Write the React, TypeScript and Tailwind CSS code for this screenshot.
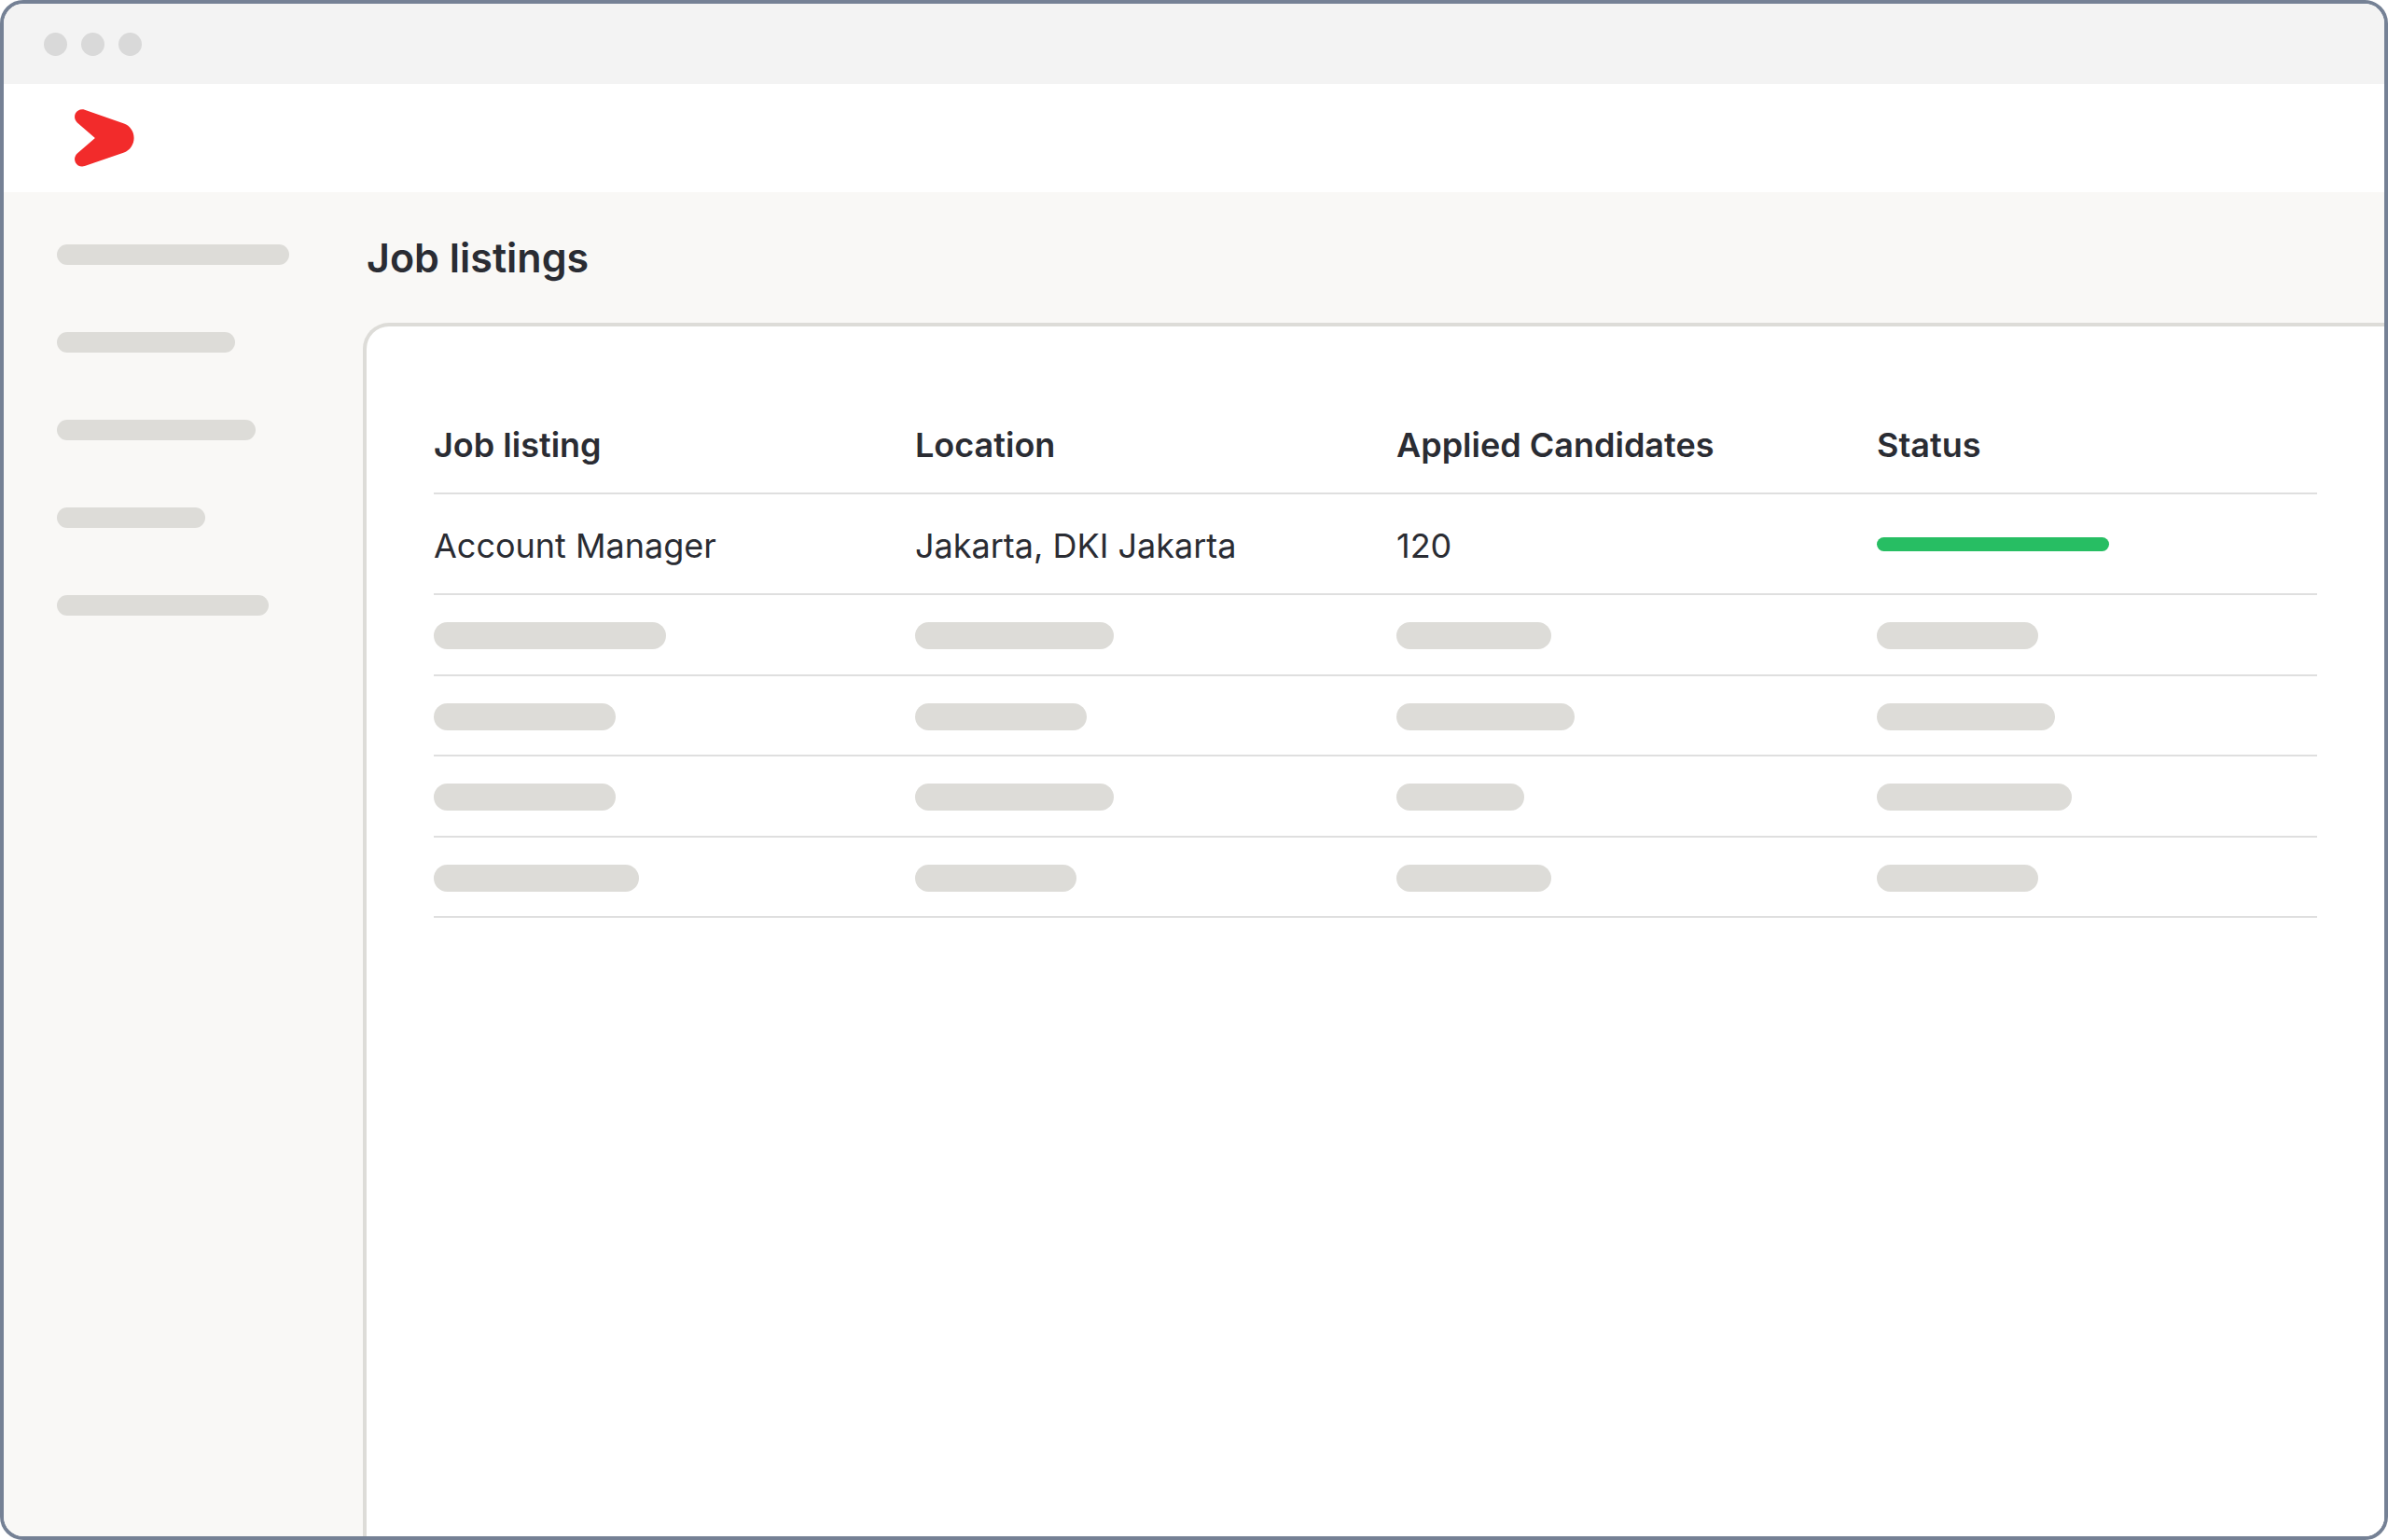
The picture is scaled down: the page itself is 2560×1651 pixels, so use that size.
const navItems = [249, 191, 213, 159, 227];

const columns = ['Job listing', 'Location', 'Applied Candidates', 'Status'];

const placeholderRows = [
  [249, 213, 166, 173],
  [195, 184, 191, 191],
  [195, 213, 137, 209],
  [220, 173, 166, 173],
];

function Logo() {
  return (
    <svg width="64" height="62" viewBox="0 0 64 62" fill="#f22b2b" aria-hidden="true">
      <path d="M10.8 .7 53 15.6C59.3 17.8 63.6 24 63.6 31S59.3 44.2 53 46.4L10.8 61.1C6.8 62.4 2.7 60.8 .9 57.2C-.8 53.8 .1 50 2.8 47.4L21.9 31 2.8 14.4C.1 11.8-.8 8 .9 4.6C2.7 1.2 6.8-.6 10.8 .7Z" />
    </svg>
  );
}

export default function App() {
  return (
    <div className="flex min-h-screen flex-col overflow-hidden rounded-[25px] border-4 border-[#758195] bg-white font-['Inter',sans-serif] text-[#2a2c33]">
      {/* Window bar */}
      <div className="flex h-[86px] items-center gap-[15px] bg-[#f3f3f3] px-[43px]">
        {[...Array(3)].map((_, i) => (
          <span key={i} className="size-[25px] rounded-full bg-[#d9d9d9]" />
        ))}
      </div>

      <header className="flex h-[116px] items-center px-[76px]">
        <Logo />
      </header>

      <div className="flex flex-1 bg-[#f9f8f6]">
        {/* Sidebar skeleton */}
        <aside className="flex w-[385px] shrink-0 flex-col gap-[72px] px-[57px] pt-[56px]">
          {navItems.map((w, i) => (
            <div key={i} className="h-[22px] rounded-full bg-[#dddcd8]" style={{ width: w }} />
          ))}
        </aside>

        <main className="flex flex-1 flex-col">
          <div className="flex h-[140px] items-center px-1">
            <h1 className="text-[43px] leading-[52px] font-semibold">Job listings</h1>
          </div>

          <section className="flex-1 rounded-tl-[28px] border-t-4 border-l-4 border-[#dddcd8] bg-white pt-[105px] pr-[72px] pl-[72px]">
            <table className="w-full table-fixed border-separate border-spacing-0 text-left text-[36px] leading-[44px]">
              <colgroup>
                <col className="w-[516px]" />
                <col className="w-[516px]" />
                <col className="w-[515px]" />
                <col />
              </colgroup>
              <thead>
                <tr>
                  {columns.map((label) => (
                    <th key={label} className="border-b-2 border-[#dfdfdf] pb-[29px] font-semibold">{label}</th>
                  ))}
                </tr>
              </thead>
              <tbody>
                <tr className="h-[108px] *:border-b-2 *:border-[#dfdfdf]">
                  <td className="pt-1">Account Manager</td>
                  <td className="pt-1">Jakarta, DKI Jakarta</td>
                  <td className="pt-1">120</td>
                  <td>
                    <div className="h-[15px] w-[249px] rounded-full bg-[#27be63]" />
                  </td>
                </tr>
                {placeholderRows.map((row, i) => (
                  <tr key={i} className="h-[86px] even:h-[87px]">
                    {row.map((w, j) => (
                      <td key={j} className="border-b-2 border-[#dfdfdf] pt-0.5">
                        <div className="h-[29px] rounded-full bg-[#dddcd8]" style={{ width: w }} />
                      </td>
                    ))}
                  </tr>
                ))}
              </tbody>
            </table>
          </section>
        </main>
      </div>
    </div>
  );
}
